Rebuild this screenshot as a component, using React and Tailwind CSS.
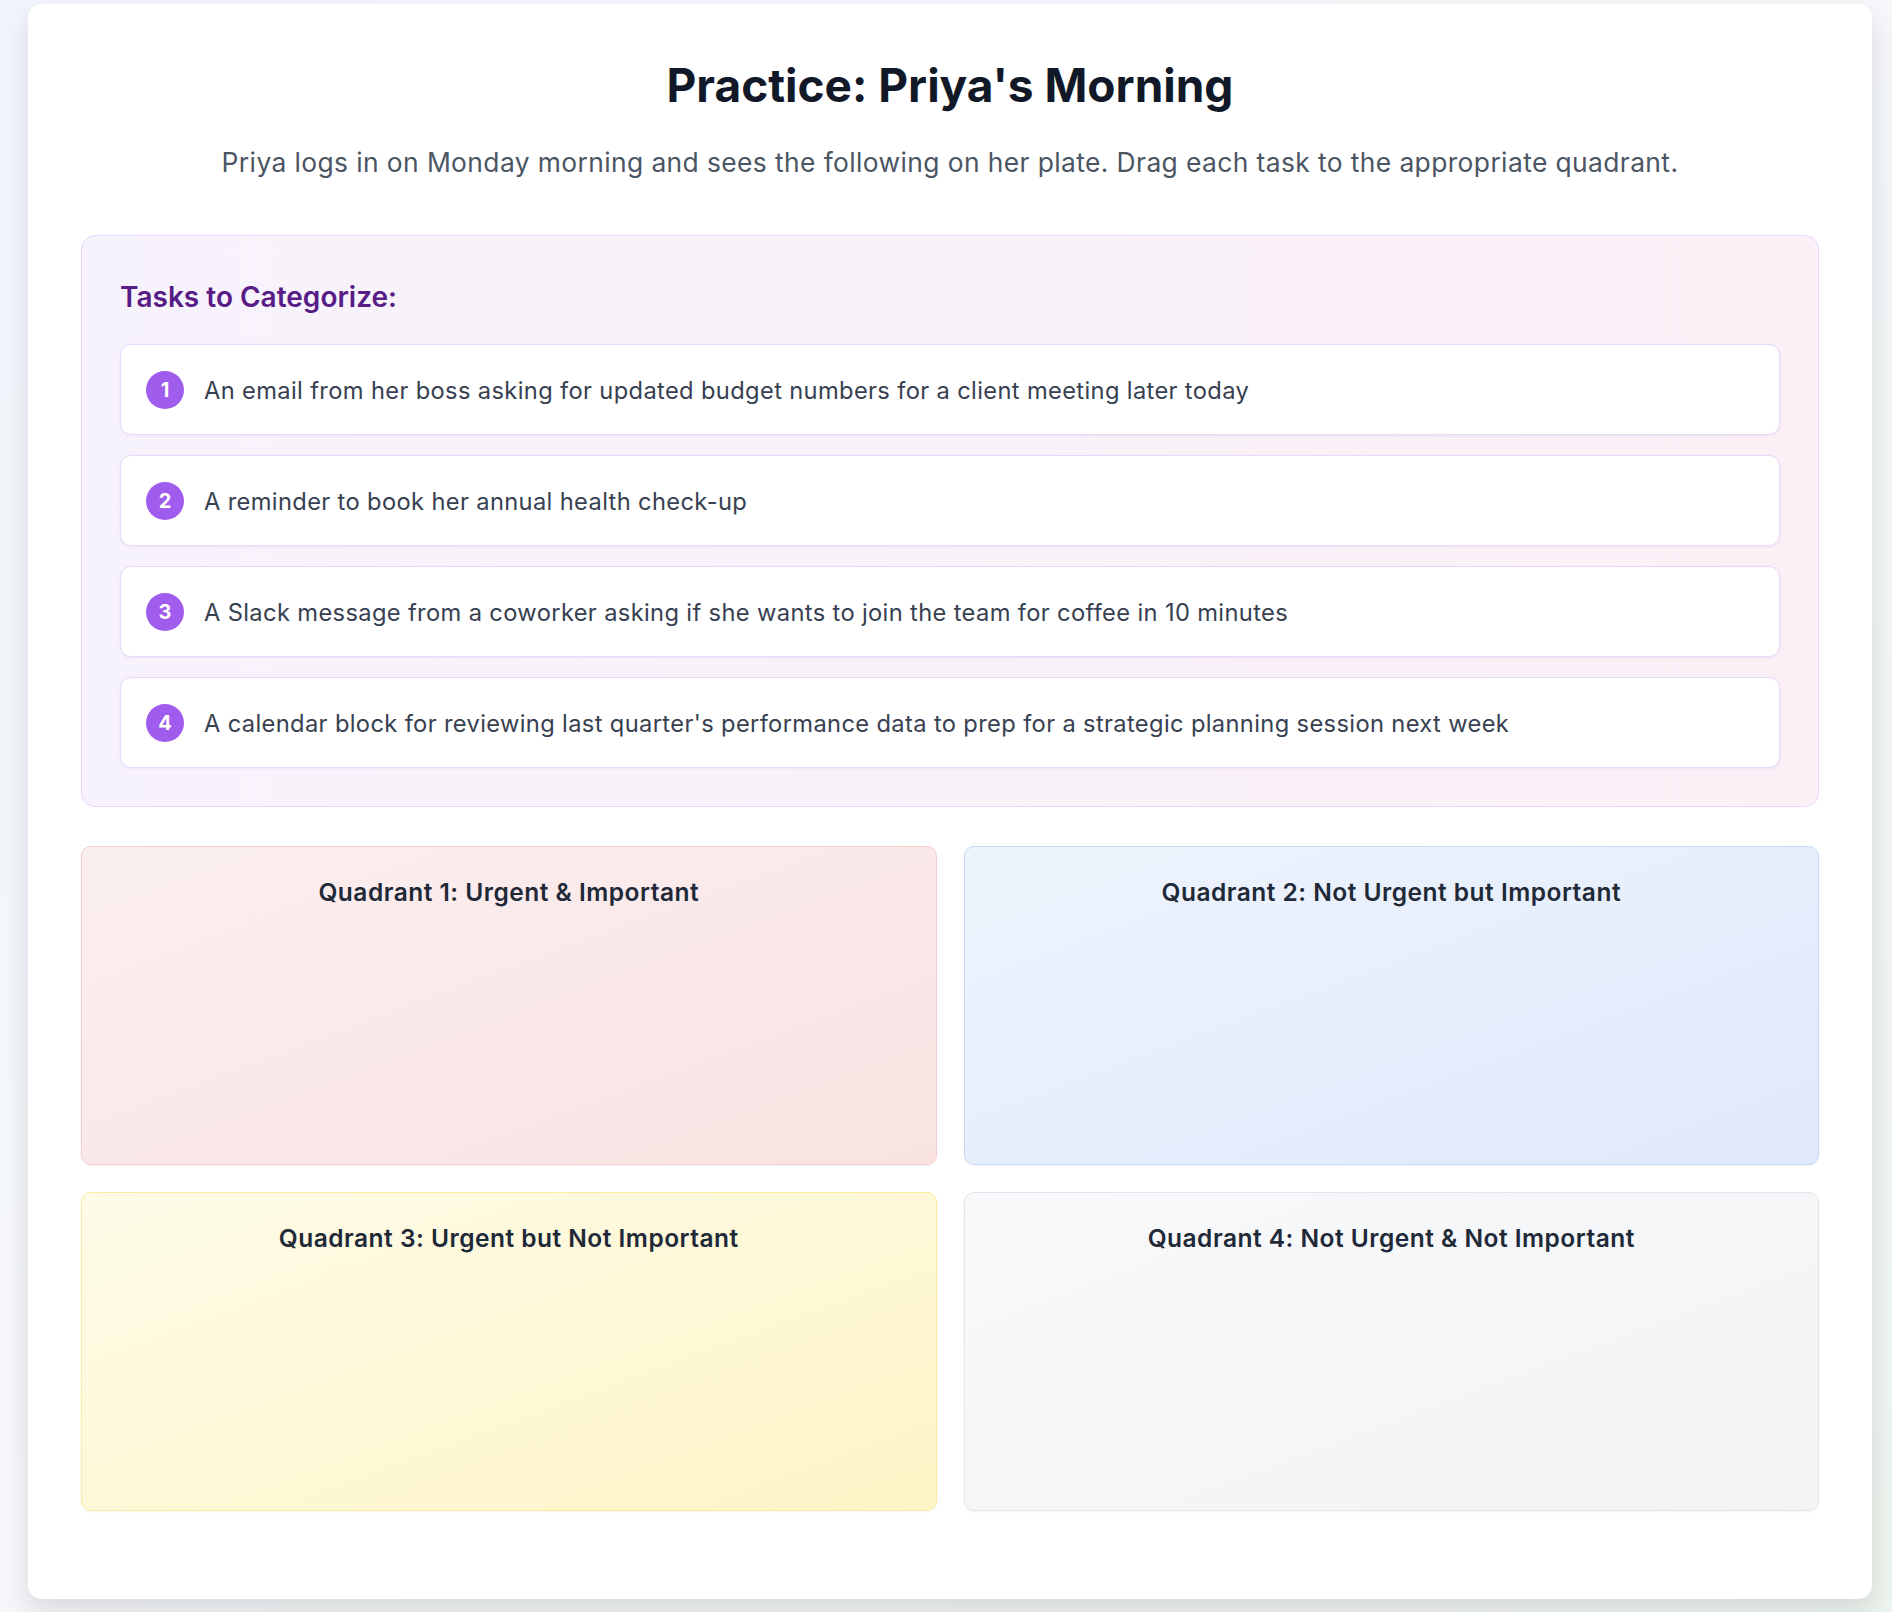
import React from "react";

const tasks = [
  "An email from her boss asking for updated budget numbers for a client meeting later today",
  "A reminder to book her annual health check-up",
  "A Slack message from a coworker asking if she wants to join the team for coffee in 10 minutes",
  "A calendar block for reviewing last quarter's performance data to prep for a strategic planning session next week",
];

const quadrants = [
  {
    title: "Quadrant 1: Urgent & Important",
    style: "bg-gradient-to-br from-[#fbeff0] to-[#f9e2e2] border-[#f6cccc]",
  },
  {
    title: "Quadrant 2: Not Urgent but Important",
    style: "bg-gradient-to-br from-[#eef4fd] to-[#dfe9fb] border-[#c5daf7]",
  },
  {
    title: "Quadrant 3: Urgent but Not Important",
    style: "bg-gradient-to-br from-[#fefbe8] to-[#fdf5c6] border-[#fbed9e]",
  },
  {
    title: "Quadrant 4: Not Urgent & Not Important",
    style: "bg-gradient-to-br from-[#f8f9fb] to-[#f2f3f5] border-[#e3e5ea]",
  },
];

const TaskCard = ({ n, text }) => (
  <div className="flex items-center gap-[20px] h-[91px] px-[25px] bg-white border border-[#e6d9fb] rounded-[11px] shadow-[0_1px_3px_rgba(120,80,180,0.08)]">
    <span className="flex items-center justify-center w-[38px] h-[38px] shrink-0 rounded-full bg-[#a05ced] text-white text-[20px] font-bold">
      {n}
    </span>
    <span className="pt-[3px] text-[23.7px] tracking-[0.015em] text-[#374151] leading-[32px]">{text}</span>
  </div>
);

const Quadrant = ({ title, style }) => (
  <div className={`h-[319px] border rounded-[10px] pt-[30px] shadow-[0_1px_3px_rgba(0,0,0,0.05)] ${style}`}>
    <h3 className="text-center text-[24.5px] tracking-[0.02em] leading-[30px] font-semibold text-[#1f2937]">{title}</h3>
  </div>
);

export default function App() {
  return (
    <div className="min-h-[1612px] pt-[4px] pl-[28px] bg-gradient-to-br from-[#f2f5fc] via-[#f5f7fa] to-[#eef5ef] font-['Inter',sans-serif]">
      <div className="w-[1844px] bg-white rounded-[14px] shadow-[0_12px_28px_rgba(0,0,0,0.12)] px-[53px] pt-[52px] pb-[88px]">
        <h1 className="text-center text-[46px] leading-[58px] font-bold text-[#111827]">
          Practice: Priya's Morning
        </h1>
        <p className="mt-[32px] text-center text-[26.4px] tracking-[0.015em] leading-[32px] text-[#4b5563]">
          Priya logs in on Monday morning and sees the following on her plate. Drag each task to the appropriate quadrant.
        </p>

        <section className="mt-[57px] border border-[#e7d8fb] rounded-[14px] bg-gradient-to-r from-[#f7f3fc] to-[#fbf0f6] px-[38px] pt-[42px] pb-[38px]">
          <h2 className="text-[28px] leading-[38px] font-semibold text-[#581c87] mb-[28px]">
            Tasks to Categorize:
          </h2>
          <div className="flex flex-col gap-[20px]">
            {tasks.map((t, i) => (
              <TaskCard key={i} n={i + 1} text={t} />
            ))}
          </div>
        </section>

        <div className="mt-[39px] grid grid-cols-2 gap-[27px]">
          {quadrants.map((q) => (
            <Quadrant key={q.title} title={q.title} style={q.style} />
          ))}
        </div>
      </div>
    </div>
  );
}
